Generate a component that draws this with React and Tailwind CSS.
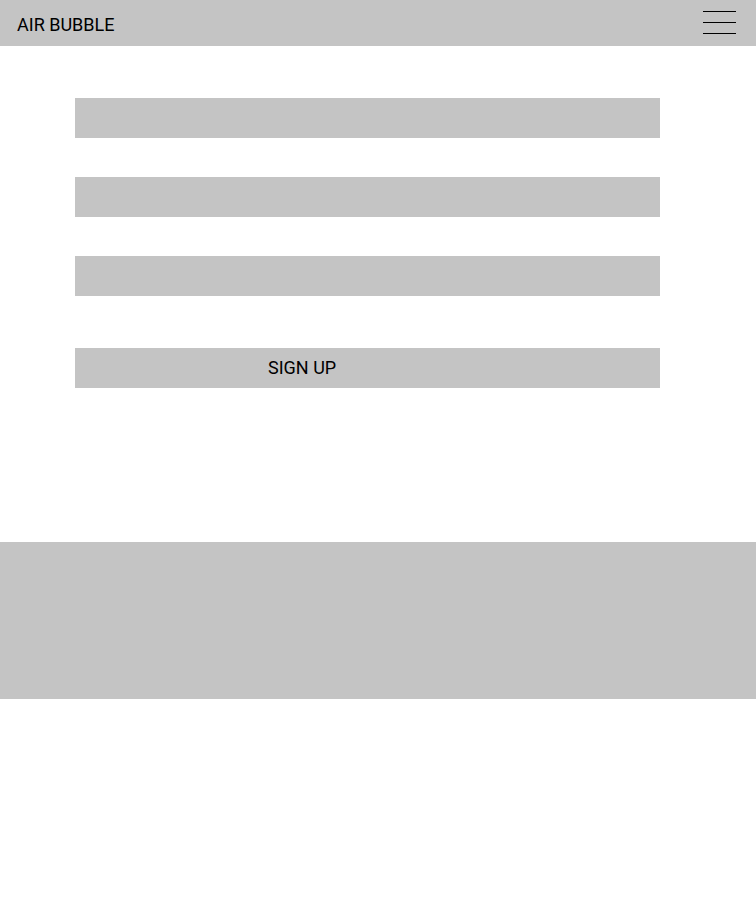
import React from 'react';

function MenuIcon() {
  return (
    <button className="self-start mt-[11px] flex flex-col gap-[10px] w-[33px] mr-[20px]" aria-label="menu">
      <span className="block h-px w-full bg-black" />
      <span className="block h-px w-full bg-black" />
      <span className="block h-px w-full bg-black" />
    </button>
  );
}

export default function App() {
  return (
    <div className="min-h-[924px] bg-white font-['Roboto',sans-serif] text-black">
      <header className="h-[46px] bg-[#c4c4c4] flex items-center justify-between pl-[17px]">
        <span className="text-[18px] leading-none pt-[4px]">AIR BUBBLE</span>
        <MenuIcon />
      </header>

      <form className="pt-[52px] pl-[75px]" onSubmit={(e) => e.preventDefault()}>
        <div className="flex flex-col gap-[39px] w-[585px]">
          <input className="h-[40px] w-full bg-[#c4c4c4] outline-none" />
          <input className="h-[40px] w-full bg-[#c4c4c4] outline-none" />
          <input className="h-[40px] w-full bg-[#c4c4c4] outline-none" />
        </div>
        <button
          type="submit"
          className="mt-[52px] h-[40px] w-[585px] bg-[#c4c4c4] flex items-center pl-[193px] text-[18px] leading-none"
        >
          SIGN UP
        </button>
      </form>

      <footer className="mt-[154px] h-[157px] bg-[#c4c4c4]" />
    </div>
  );
}
